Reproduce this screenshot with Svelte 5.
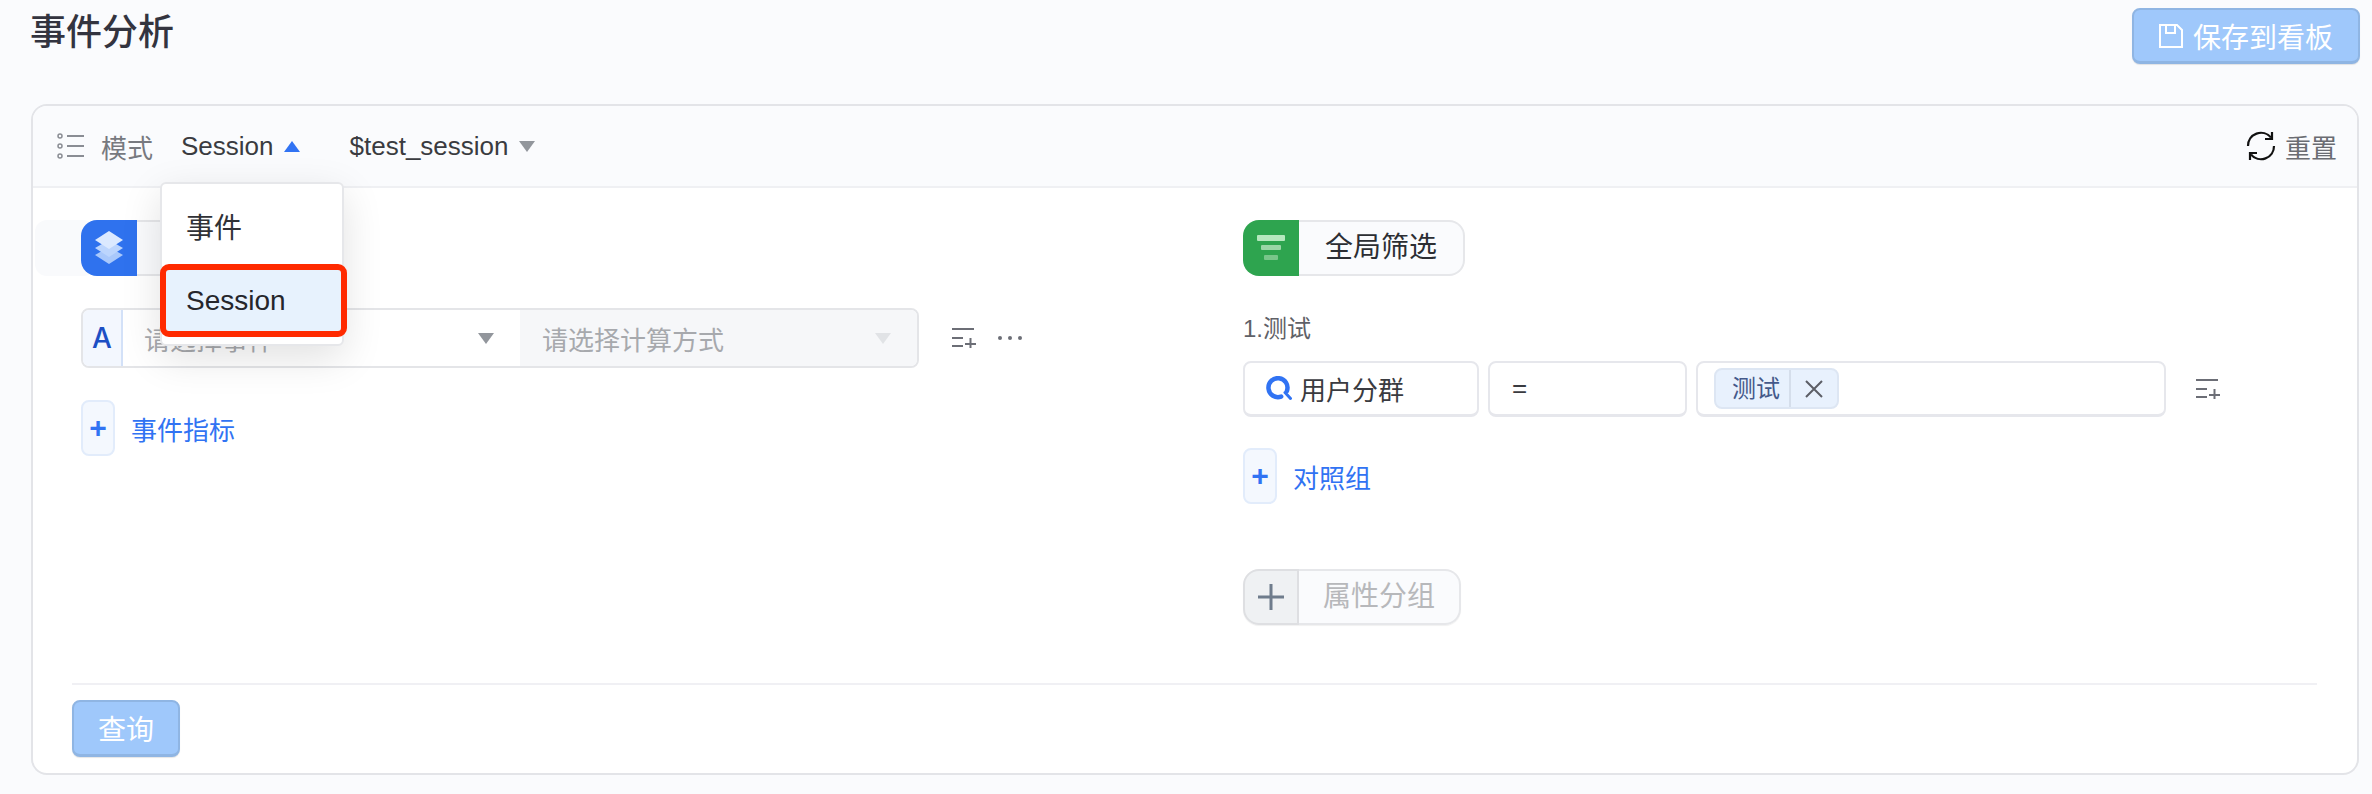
<script lang="ts">
  let mode = 'Session';
  const options = ['事件', 'Session'];
</script>

<div class="page">
  <header class="top">
    <h1>事件分析</h1>
    <button class="btn-primary save">
      <svg width="24" height="26" viewBox="0 0 24 26" fill="none" stroke="#fff" stroke-width="2">
        <path d="M1 2h17l5 5v17H1z" />
        <path d="M7 2v8h9V2" />
      </svg>
      保存到看板
    </button>
  </header>

  <section class="card">
    <div class="bar">
      <svg class="list-icon" width="28" height="28" viewBox="0 0 28 28" fill="none" stroke="#8a8d94">
        <circle cx="3" cy="4" r="2" stroke-width="1.5" />
        <circle cx="3" cy="14" r="2" stroke-width="1.5" />
        <circle cx="3" cy="24" r="2" stroke-width="1.5" />
        <path d="M10 4h17M10 14h17M10 24h17" stroke-width="2" />
      </svg>
      <span class="mode-label">模式</span>
      <span class="pick first">Session <i class="tri up"></i></span>
      <span class="pick">$test_session <i class="tri down"></i></span>
      <span class="reset">
        <svg width="30" height="32" viewBox="0 0 30 32" fill="none" stroke="#111" stroke-width="2.200">
          <path d="M2 16A13 13 0 0 1 25 7.500" />
          <path d="M28 16A13 13 0 0 1 5 24.500" />
          <path d="M26 2v7h-7M4 30v-7h7" />
        </svg>
        重置
      </span>
    </div>

    <div class="menu">
      {#each options as opt}
        <div class="option" class:active={opt === mode}>{opt}</div>
      {/each}
    </div>

    <div class="body">
      <div class="col left">
        <div class="section-tag first">
          <span class="tag-icon blue">
            <svg width="36" height="34" viewBox="0 0 36 34">
              <path d="M18 16l14 8-14 9-14-9z" fill="#a9c8fb" />
              <path d="M18 9l14 8-14 9-14-9z" fill="#bcd5fd" />
              <path d="M18 0l14 9-14 9-14-9z" fill="#dbe9ff" />
            </svg>
          </span>
          <span class="tag-text"></span>
        </div>

        <div class="metric">
          <div class="metric-field">
            <span class="letter">A</span>
            <span class="event-select">请选择事件 <i class="tri down"></i></span>
            <span class="calc-select">请选择计算方式 <i class="tri down light"></i></span>
          </div>
          <svg class="add-icon" width="26" height="22" viewBox="0 0 26 22" fill="none" stroke="#6c6e76" stroke-width="2">
            <path d="M1 2h22M1 11h11M1 19h11M14 17h11M19.500 11v10" />
          </svg>
          <span class="dots"><i></i><i></i><i></i></span>
        </div>

        <div class="add-row">
          <span class="plus-box">+</span>
          <span>事件指标</span>
        </div>
      </div>

      <div class="col right">
        <div class="section-tag">
          <span class="tag-icon green">
            <svg width="28" height="26" viewBox="0 0 28 26">
              <rect width="28" height="6" rx="1" fill="#b5e8be" />
              <rect x="4" y="10" width="20" height="5" rx="1" fill="#9ad6a6" />
              <rect x="7" y="20" width="14" height="5" rx="1" fill="#78c68a" />
            </svg>
          </span>
          <span class="tag-text">全局筛选</span>
        </div>

        <div class="filter-name">1.测试</div>
        <div class="filter-row">
          <span class="box seg">
            <svg width="26" height="25" viewBox="0 0 26 25" fill="none" stroke="#3173f3" stroke-width="4.500" stroke-linecap="round">
              <path d="M20.900 14.900A9.500 9.500 0 1 0 15.200 20.600" />
              <path d="M19 16.500l5.500 6" stroke-width="3" />
            </svg>
            用户分群
          </span>
          <span class="box op">=</span>
          <span class="box values">
            <span class="chip"><span class="chip-text">测试</span><span class="chip-x">
              <svg width="18" height="18" viewBox="0 0 18 18" stroke="#5c5e66" stroke-width="2"><path d="M1 1l16 16M17 1L1 17" /></svg>
            </span></span>
          </span>
          <svg class="add-icon" width="26" height="22" viewBox="0 0 26 22" fill="none" stroke="#6c6e76" stroke-width="2">
            <path d="M1 2h22M1 11h11M1 19h11M14 17h11M19.500 11v10" />
          </svg>
        </div>

        <div class="add-row compare">
          <span class="plus-box">+</span>
          <span>对照组</span>
        </div>

        <div class="section-tag group">
          <span class="tag-icon gray">
            <svg width="26" height="26" viewBox="0 0 26 26" stroke="#6f7c8c" stroke-width="3"><path d="M0 13h26M13 0v26" /></svg>
          </span>
          <span class="tag-text">属性分组</span>
        </div>
      </div>
    </div>

    <div class="foot">
      <button class="btn-primary query">查询</button>
    </div>
  </section>
</div>

<style>
  :global(body) {
    margin: 0;
    background: #fafbfd;
  }

  .page {
    width: 2372px;
    height: 794px;
    box-sizing: border-box;
    padding: 0 13px 0 30px;
    font-family: "Liberation Sans", "Noto Sans CJK SC", sans-serif;
    color: #2c2e33;
    overflow: hidden;
  }

  .top {
    display: flex;
    justify-content: space-between;
    align-items: flex-start;
    height: 104px;
    padding-top: 8px;
    box-sizing: border-box;
  }

  h1 {
    margin: 0;
    font-size: 36px;
    line-height: 50px;
    font-weight: 500;
    color: #33343f;
  }

  .btn-primary {
    border: 2px solid #8fb5e3;
    border-bottom-width: 3px;
    border-radius: 8px;
    background: #9fc8fb;
    color: #fff;
    font-family: inherit;
    box-shadow: 0 1px 1px rgba(0, 0, 0, 0.1);
  }

  .save {
    width: 228px;
    height: 56px;
    margin-right: -1px;
    font-size: 28px;
    display: flex;
    align-items: center;
    justify-content: center;
    gap: 10px;
  }

  .card {
    position: relative;
    height: 671px;
    box-sizing: border-box;
    margin-left: 1px;
    border: 2px solid #e3e4e8;
    border-radius: 16px;
    background: #fff;
  }

  .bar {
    height: 82px;
    box-sizing: border-box;
    display: flex;
    align-items: center;
    padding: 0 20px 0 24px;
    background: #fafbfd;
    border-bottom: 2px solid #eff0f3;
    border-radius: 14px 14px 0 0;
    font-size: 26px;
  }

  .mode-label {
    margin-left: 16px;
    color: #77797f;
  }

  .pick {
    display: flex;
    align-items: center;
    gap: 10px;
    color: #3a3b40;
    margin-left: 50px;
  }

  .pick.first {
    margin-left: 28px;
  }

  .tri {
    display: inline-block;
    width: 0;
    height: 0;
    border-left: 8px solid transparent;
    border-right: 8px solid transparent;
  }

  .tri.up {
    border-bottom: 11px solid #3173f3;
  }

  .tri.down {
    border-top: 11px solid #92969c;
  }

  .tri.light {
    border-top-color: #e1e3e6;
  }

  .reset {
    margin-left: auto;
    display: flex;
    align-items: center;
    gap: 9px;
    color: #6a6c72;
  }

  .menu {
    position: absolute;
    left: 127px;
    top: 76px;
    width: 184px;
    box-sizing: border-box;
    padding: 0 0 7px;
    background: #fff;
    border: 2px solid #e6e7ea;
    border-radius: 6px;
    box-shadow: 0 12px 40px rgba(0, 0, 0, 0.12);
    z-index: 5;
    font-size: 28px;
  }

  .option {
    height: 80px;
    box-sizing: border-box;
    display: flex;
    align-items: center;
    padding: 4px 0 0 24px;
    color: #303136;
  }

  .option.active {
    height: 73px;
    margin: 0 -5px 0 -2px;
    padding: 0 0 0 20px;
    background: #e7f2fd;
    border: 6px solid #ff2a00;
    border-radius: 9px;
    color: #25262b;
  }

  .body {
    display: flex;
    height: 495px;
    box-sizing: border-box;
    padding: 32px 0 0 48px;
    font-size: 26px;
  }

  .col.left {
    width: 1162px;
    flex: none;
    box-sizing: border-box;
  }

  .col.right {
    flex: 1;
  }

  .section-tag {
    position: relative;
    display: inline-flex;
    align-items: stretch;
    height: 56px;
    vertical-align: top;
  }

  /* faint strip left of the first tag, it's in the reference */
  .section-tag.first::before {
    content: '';
    position: absolute;
    left: -46px;
    top: 0;
    width: 60px;
    height: 56px;
    background: #f9fafc;
    border-radius: 12px;
  }

  .tag-icon {
    position: relative;
    width: 56px;
    flex: none;
    display: flex;
    align-items: center;
    justify-content: center;
    border-radius: 16px 0 0 16px;
  }

  .tag-icon.blue {
    background: #2f72ee;
  }

  .tag-icon.green {
    background: #2ea44f;
  }

  .tag-icon.gray {
    background: #eff1f3;
    border: 2px solid #dedfe2;
    box-sizing: border-box;
  }

  .tag-text {
    width: 166px;
    box-sizing: border-box;
    text-align: center;
    line-height: 52px;
    font-size: 28px;
    color: #2c2e33;
    background: #fafbfd;
    border: 2px solid #e6e7ea;
    border-left: 0;
    border-radius: 0 16px 16px 0;
  }

  .section-tag.group .tag-text {
    width: 162px;
    color: #b7b8bb;
  }

  .metric {
    display: flex;
    align-items: center;
    margin-top: 32px;
  }

  .metric-field {
    display: flex;
    width: 838px;
    height: 60px;
    box-sizing: border-box;
    border: 2px solid #e4e5e8;
    border-radius: 8px;
    overflow: hidden;
  }

  .letter {
    width: 40px;
    flex: none;
    box-sizing: border-box;
    display: flex;
    align-items: center;
    justify-content: center;
    background: #f3f7fe;
    border-right: 2px solid #d3e1f8;
    color: #1d4fc4;
    font-family: Inter, sans-serif;
    font-size: 28px;
    font-weight: 500;
  }

  .event-select,
  .calc-select {
    display: flex;
    align-items: center;
    justify-content: space-between;
    color: #a7a9ad;
    font-size: 26px;
  }

  .event-select {
    width: 397px;
    box-sizing: border-box;
    padding: 0 26px 0 21px;
  }

  .calc-select {
    flex: 1;
    padding: 0 26px 0 22px;
    background: #f6f7f9;
  }

  .add-icon {
    flex: none;
  }

  .metric .add-icon {
    margin-left: 32px;
  }

  .dots {
    display: flex;
    gap: 6px;
    margin-left: 21px;
  }

  .dots i {
    width: 4px;
    height: 4px;
    border-radius: 50%;
    background: #6c6e76;
  }

  .add-row {
    display: flex;
    align-items: center;
    gap: 16px;
    margin-top: 32px;
    color: #3173f3;
    font-size: 26px;
  }

  .add-row.compare {
    margin-top: 31px;
  }

  .plus-box {
    width: 34px;
    height: 56px;
    box-sizing: border-box;
    display: flex;
    align-items: center;
    justify-content: center;
    background: #f4f8fe;
    border: 2px solid #e2ecfb;
    border-radius: 8px;
    font-size: 30px;
    font-weight: 700;
  }

  .filter-name {
    margin-top: 36px;
    height: 33px;
    line-height: 33px;
    font-size: 24px;
    color: #5f6167;
  }

  .filter-row {
    display: flex;
    align-items: center;
    gap: 9px;
    margin-top: 16px;
  }

  .box {
    display: flex;
    align-items: center;
    height: 56px;
    box-sizing: border-box;
    border: 2px solid #e6e7ec;
    border-bottom-width: 3px;
    border-radius: 8px;
    font-size: 26px;
    color: #3a3b40;
  }

  .seg {
    width: 236px;
    padding-left: 21px;
    gap: 8px;
  }

  .op {
    width: 199px;
    padding-left: 22px;
  }

  .values {
    width: 470px;
    padding-left: 16px;
  }

  .filter-row .add-icon {
    margin-left: 20px;
  }

  .chip {
    display: flex;
    height: 41px;
    box-sizing: border-box;
    background: #e8f1fd;
    border: 2px solid #dde6f3;
    border-radius: 8px;
    align-items: center;
    font-size: 24px;
    color: #44598a;
  }

  .chip-text {
    padding: 0 9px 0 16px;
    line-height: 37px;
    border-right: 2px solid #d5deeb;
  }

  .chip-x {
    width: 46px;
    display: flex;
    align-items: center;
    justify-content: center;
  }

  .section-tag.group {
    display: flex;
    width: 218px;
    margin-top: 65px;
    box-shadow: 0 1px 1px rgba(0, 0, 0, 0.06);
    border-radius: 16px;
  }

  .foot {
    margin: 0 40px 0 39px;
    border-top: 2px solid #f0f0f4;
    padding-top: 15px;
  }

  .query {
    width: 108px;
    height: 57px;
    font-size: 28px;
    display: block;
  }
</style>
